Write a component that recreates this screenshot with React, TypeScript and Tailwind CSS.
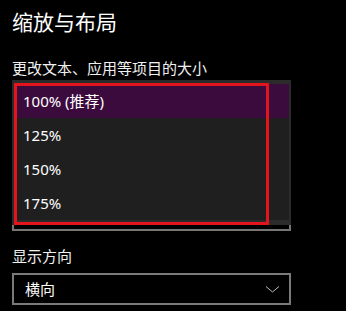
import React from 'react';

const FONT = { fontFamily: '"Noto Sans", "Noto Sans CJK SC", sans-serif' };

const options = ['100% (推荐)', '125%', '150%', '175%'];

export default function App() {
  return (
    <div
      className="w-[346px] h-[311px] bg-black pt-[12px] pl-3 pr-[55px] text-white overflow-hidden"
      style={FONT}
    >
      <div className="text-[21px] leading-[21px] h-[21px]">缩放与布局</div>

      <div className="mt-[25px] text-[15px] leading-[20px] text-[#f0f0f0]">更改文本、应用等项目的大小</div>

      {/* combobox with its open list on top */}
      <div className="relative mt-[2px] h-[151px] border-2 border-[#767676]">
        <div className="absolute -left-[2px] -right-[2px] -top-[2px] h-[145px] bg-[#2b2b2b] px-[2px] pt-[4px] pb-[5px]">
          <div className="bg-[#1f1f1f]">
            {options.map((o, i) => (
              <div
                key={o}
                className={`h-[34px] flex items-center pl-[9px] text-[15px] ${i === 0 ? 'bg-[#3c0b3e]' : ''}`}
              >
                {o}
              </div>
            ))}
          </div>
          <div className="absolute left-[2px] top-[3px] w-[255px] h-[142px] border-[3px] border-[#e3141c]" />
        </div>
      </div>

      <div className="mt-[15px] text-[15px] leading-[20px] text-[#f0f0f0]">显示方向</div>

      <div className="mt-[7px] h-[32px] border-2 border-[#7a7a7a] flex items-center justify-between pl-[11px] pr-[9px]">
        <span className="text-[15px]">横向</span>
        <svg width="15" height="7" viewBox="0 0 15 7" fill="none">
          <path d="M1 0.5 L7.5 6 L14 0.5" stroke="#bdbdbd" strokeWidth="1" />
        </svg>
      </div>
    </div>
  );
}
